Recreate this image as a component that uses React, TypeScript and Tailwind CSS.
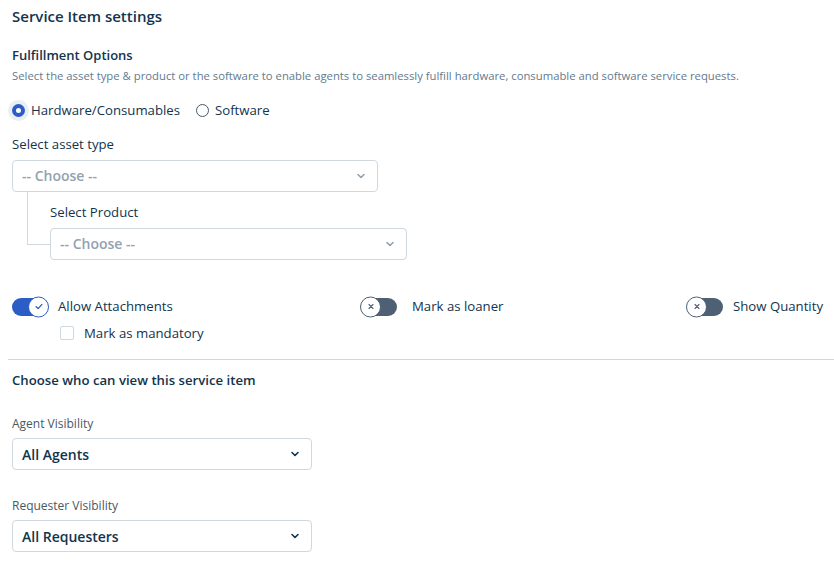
import { useState } from 'react';

function Chevron({ className }: { className?: string }) {
  return (
    <svg viewBox="0 0 12 12" className={className} fill="none" stroke="currentColor" strokeWidth="1.6" strokeLinecap="round" strokeLinejoin="round">
      <path d="M3 4.5 6 7.5 9 4.5" />
    </svg>
  );
}

function Toggle({ on }: { on: boolean }) {
  return (
    <span className={`relative inline-flex h-[18px] w-[36px] shrink-0 items-center rounded-full ${on ? 'bg-[#2c5cc5]' : 'bg-[#4d6074]'}`}>
      <span
        className={`absolute top-1/2 flex h-[21px] w-[21px] -translate-y-1/2 items-center justify-center rounded-full border bg-white ${
          on ? 'right-[-1px] border-[#2c5cc5]' : 'left-[-1px] border-[#4d6074]'
        }`}
      >
        {on ? (
          <svg viewBox="0 0 12 12" className="h-[10px] w-[10px]" fill="none" stroke="#2c5cc5" strokeWidth="1.5" strokeLinecap="round" strokeLinejoin="round">
            <path d="M2.5 6.2 5 8.5 9.5 3.5" />
          </svg>
        ) : (
          <svg viewBox="0 0 12 12" className="h-[8px] w-[8px]" fill="none" stroke="#4d6074" strokeWidth="1.6" strokeLinecap="round">
            <path d="M3 3l6 6M9 3l-6 6" />
          </svg>
        )}
      </span>
    </span>
  );
}

function SelectBox({ value, placeholder, className }: { value: string; placeholder?: boolean; className?: string }) {
  return (
    <div className={`flex h-[32px] items-center justify-between rounded border border-[#cfd7df] bg-white pl-[9px] pr-[10px] ${className ?? ''}`}>
      <span className={`text-[14px] font-semibold ${placeholder ? 'text-[#92a2b1]' : 'text-[#12344d]'}`}>{value}</span>
      <Chevron className={`h-[12px] w-[12px] ${placeholder ? 'text-[#92a2b1]' : 'text-[#12344d]'}`} />
    </div>
  );
}

export default function App() {
  const [kind, setKind] = useState<'hw' | 'sw'>('hw');

  return (
    <div className="min-h-screen bg-white text-[#12344d]" style={{ fontFamily: '"Open Sans", "Noto Sans", sans-serif' }}>
      <div className="pl-[12px] pt-[6px]">
        <h1 className="text-[15px] font-semibold leading-[20px]">Service Item settings</h1>

        <h2 className="mt-[20px] text-[13px] font-semibold leading-[18px]">Fulfillment Options</h2>
        <p className="mt-[4px] text-[11.3px] leading-[16px] text-[#647a8e]">
          Select the asset type &amp; product or the software to enable agents to seamlessly fulfill hardware, consumable and software service requests.
        </p>

        <div className="mt-[17px] flex items-center gap-[16px] text-[13.2px]">
          <label className="flex items-center gap-[6px]" onClick={() => setKind('hw')}>
            <span className={`flex h-[13px] w-[13px] items-center justify-center rounded-full ${kind === 'hw' ? 'bg-[#2c5cc5] ring-[4px] ring-[#ebeff3]' : 'border border-[#475867]'}`}>
              {kind === 'hw' ? <span className="h-[5px] w-[5px] rounded-full bg-white" /> : null}
            </span>
            <span>Hardware/Consumables</span>
          </label>
          <label className="flex items-center gap-[6px]" onClick={() => setKind('sw')}>
            <span className={`flex h-[13px] w-[13px] items-center justify-center rounded-full ${kind === 'sw' ? 'bg-[#2c5cc5] ring-[4px] ring-[#ebeff3]' : 'border border-[#475867]'}`}>
              {kind === 'sw' ? <span className="h-[5px] w-[5px] rounded-full bg-white" /> : null}
            </span>
            <span>Software</span>
          </label>
        </div>

        <div className="mt-[13px] text-[13.2px] leading-[20px]">Select asset type</div>
        <SelectBox value="-- Choose --" placeholder className="mt-[6px] w-[366px]" />

        <div className="flex">
          <div className="ml-[15px] h-[53px] w-[23px] border-b border-l border-[#cfd7df]" />
          <div className="pt-[10px]">
            <div className="text-[13.2px] leading-[20px]">Select Product</div>
            <SelectBox value="-- Choose --" placeholder className="mt-[6px] w-[357px]" />
          </div>
        </div>

        <div className="mt-[37px] flex items-center pr-[11px]">
          <div className="flex w-[349px] items-center gap-[10px]">
            <Toggle on />
            <span className="text-[13.2px]">Allow Attachments</span>
          </div>
          <div className="flex flex-1 items-center gap-[15px]">
            <Toggle on={false} />
            <span className="text-[13.2px]">Mark as loaner</span>
          </div>
          <div className="flex items-center gap-[10px]">
            <Toggle on={false} />
            <span className="text-[13.2px]">Show Quantity</span>
          </div>
        </div>

        <label className="ml-[48px] mt-[7px] flex items-center gap-[10px]">
          <span className="h-[14px] w-[14px] rounded-[2px] border border-[#cfd7df] bg-white" />
          <span className="text-[13.2px]">Mark as mandatory</span>
        </label>
      </div>

      <div className="ml-[8px] mt-[16px] border-t border-[#cfd7df]" />

      <div className="pl-[12px]">
        <h2 className="mt-[11px] text-[13.2px] font-semibold leading-[18px]">Choose who can view this service item</h2>

        <div className="mt-[27px] text-[12px] leading-[16px] text-[#475867]">Agent Visibility</div>
        <SelectBox value="All Agents" className="mt-[6px] w-[300px]" />

        <div className="mt-[28px] text-[12px] leading-[16px] text-[#475867]">Requester Visibility</div>
        <SelectBox value="All Requesters" className="mt-[6px] w-[300px]" />
      </div>
    </div>
  );
}
